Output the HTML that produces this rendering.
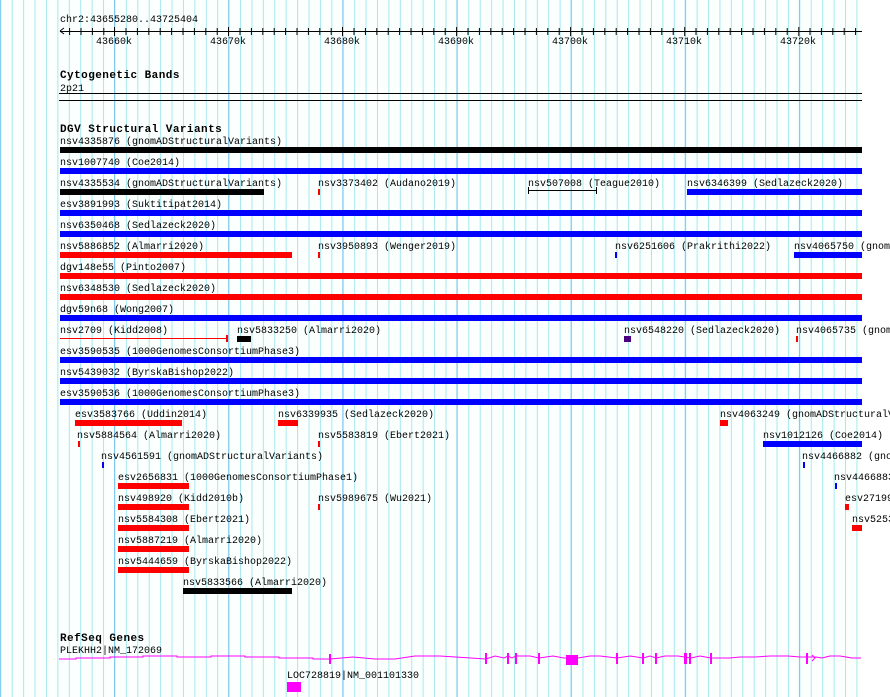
<!DOCTYPE html>
<html><head><meta charset="utf-8"><style>
html,body{margin:0;padding:0;background:#fff;}
#w{position:relative;width:890px;height:697px;overflow:hidden;background:#fff;font-family:"Liberation Mono","DejaVu Sans Mono",monospace;font-size:10px;line-height:10px;color:#000;}
.t{position:absolute;white-space:nowrap;margin-top:3px;}
.b{position:absolute;height:6px;}
.h{font-weight:bold;font-size:11px;letter-spacing:0.45px;}
.k{background:#000}.u{background:#0000ff}.r{background:#ff0000}
</style></head><body><div id="w">
<svg style="position:absolute;left:0;top:0" width="890" height="697">
<defs>
<pattern id="mn" x="0.3" y="0" width="11.415" height="697" patternUnits="userSpaceOnUse"><rect x="0" y="0" width="1" height="697" fill="#a8e8ee"/></pattern>
<pattern id="mj" x="114" y="0" width="114.15" height="697" patternUnits="userSpaceOnUse"><rect x="0" y="0" width="1" height="697" fill="#80c8ee"/></pattern>
</defs>
<rect x="0" y="0" width="862" height="697" fill="#fbfffd"/>
<rect x="0" y="0" width="862" height="697" fill="url(#mn)"/>
<rect x="0" y="0" width="862" height="697" fill="url(#mj)"/>
</svg>

<div class="t" style="left:60px;top:13px">chr2:43655280..43725404</div>
<div class="b k" style="left:60px;top:31px;width:802px;height:1px"></div>
<svg style="position:absolute;left:0;top:0" width="890" height="60">
<path d="M60,31 l4,-3 M60,31 l4,3" stroke="#000" fill="none"/>
<g stroke="#000">
<line x1="69.6" y1="28" x2="69.6" y2="35"/><line x1="81" y1="28" x2="81" y2="35"/><line x1="92.4" y1="28" x2="92.4" y2="35"/><line x1="103.8" y1="28" x2="103.8" y2="35"/><line x1="114.5" y1="27" x2="114.5" y2="36"/><line x1="126" y1="28" x2="126" y2="35"/><line x1="137.4" y1="28" x2="137.4" y2="35"/><line x1="148.8" y1="28" x2="148.8" y2="35"/><line x1="160.2" y1="28" x2="160.2" y2="35"/><line x1="171.6" y1="28" x2="171.6" y2="35"/><line x1="183" y1="28" x2="183" y2="35"/><line x1="194.4" y1="28" x2="194.4" y2="35"/><line x1="205.8" y1="28" x2="205.8" y2="35"/><line x1="217.2" y1="28" x2="217.2" y2="35"/><line x1="228.5" y1="27" x2="228.5" y2="36"/><line x1="240" y1="28" x2="240" y2="35"/><line x1="251.4" y1="28" x2="251.4" y2="35"/><line x1="262.8" y1="28" x2="262.8" y2="35"/><line x1="274.2" y1="28" x2="274.2" y2="35"/><line x1="285.6" y1="28" x2="285.6" y2="35"/><line x1="297" y1="28" x2="297" y2="35"/><line x1="308.4" y1="28" x2="308.4" y2="35"/><line x1="319.8" y1="28" x2="319.8" y2="35"/><line x1="331.2" y1="28" x2="331.2" y2="35"/><line x1="342.5" y1="27" x2="342.5" y2="36"/><line x1="354" y1="28" x2="354" y2="35"/><line x1="365.4" y1="28" x2="365.4" y2="35"/><line x1="376.8" y1="28" x2="376.8" y2="35"/><line x1="388.2" y1="28" x2="388.2" y2="35"/><line x1="399.6" y1="28" x2="399.6" y2="35"/><line x1="411" y1="28" x2="411" y2="35"/><line x1="422.4" y1="28" x2="422.4" y2="35"/><line x1="433.8" y1="28" x2="433.8" y2="35"/><line x1="445.2" y1="28" x2="445.2" y2="35"/><line x1="456.6" y1="27" x2="456.6" y2="36"/><line x1="468" y1="28" x2="468" y2="35"/><line x1="479.4" y1="28" x2="479.4" y2="35"/><line x1="490.8" y1="28" x2="490.8" y2="35"/><line x1="502.2" y1="28" x2="502.2" y2="35"/><line x1="513.6" y1="28" x2="513.6" y2="35"/><line x1="525" y1="28" x2="525" y2="35"/><line x1="536.4" y1="28" x2="536.4" y2="35"/><line x1="547.8" y1="28" x2="547.8" y2="35"/><line x1="559.2" y1="28" x2="559.2" y2="35"/><line x1="570.6" y1="27" x2="570.6" y2="36"/><line x1="582" y1="28" x2="582" y2="35"/><line x1="593.4" y1="28" x2="593.4" y2="35"/><line x1="604.8" y1="28" x2="604.8" y2="35"/><line x1="616.2" y1="28" x2="616.2" y2="35"/><line x1="627.6" y1="28" x2="627.6" y2="35"/><line x1="639" y1="28" x2="639" y2="35"/><line x1="650.4" y1="28" x2="650.4" y2="35"/><line x1="661.8" y1="28" x2="661.8" y2="35"/><line x1="673.2" y1="28" x2="673.2" y2="35"/><line x1="684.7" y1="27" x2="684.7" y2="36"/><line x1="696" y1="28" x2="696" y2="35"/><line x1="707.4" y1="28" x2="707.4" y2="35"/><line x1="718.8" y1="28" x2="718.8" y2="35"/><line x1="730.2" y1="28" x2="730.2" y2="35"/><line x1="741.6" y1="28" x2="741.6" y2="35"/><line x1="753" y1="28" x2="753" y2="35"/><line x1="764.4" y1="28" x2="764.4" y2="35"/><line x1="775.8" y1="28" x2="775.8" y2="35"/><line x1="787.2" y1="28" x2="787.2" y2="35"/><line x1="798.8" y1="27" x2="798.8" y2="36"/><line x1="810" y1="28" x2="810" y2="35"/><line x1="821.4" y1="28" x2="821.4" y2="35"/><line x1="832.8" y1="28" x2="832.8" y2="35"/><line x1="844.2" y1="28" x2="844.2" y2="35"/><line x1="855.6" y1="28" x2="855.6" y2="35"/>
</g></svg>
<div class="t" style="left:96px;top:35px">43660k</div>
<div class="t" style="left:210px;top:35px">43670k</div>
<div class="t" style="left:324px;top:35px">43680k</div>
<div class="t" style="left:438px;top:35px">43690k</div>
<div class="t" style="left:552px;top:35px">43700k</div>
<div class="t" style="left:666px;top:35px">43710k</div>
<div class="t" style="left:780px;top:35px">43720k</div>

<div class="t h" style="left:60px;top:68px">Cytogenetic Bands</div>
<div class="t" style="left:60px;top:82px">2p21</div>
<div class="b k" style="left:59px;top:93px;width:803px;height:1px"></div>
<div class="b k" style="left:59px;top:100px;width:803px;height:1px"></div>

<div class="t h" style="left:60px;top:122px">DGV Structural Variants</div>

<div class="t" style="left:60px;top:135px">nsv4335876 (gnomADStructuralVariants)</div><div class="b k" style="left:60px;top:147px;width:802px"></div>
<div class="t" style="left:60px;top:156px">nsv1007740 (Coe2014)</div><div class="b u" style="left:60px;top:168px;width:802px"></div>
<div class="t" style="left:60px;top:177px">nsv4335534 (gnomADStructuralVariants)</div><div class="b k" style="left:60px;top:189px;width:204px"></div>
<div class="t" style="left:318px;top:177px">nsv3373402 (Audano2019)</div><div class="b r" style="left:318px;top:189px;width:2px"></div>
<div class="t" style="left:528px;top:177px">nsv507008 (Teague2010)</div><div class="b k" style="left:528px;top:190px;width:69px;height:1px"></div><div class="b k" style="left:528px;top:187px;width:1px;height:7px"></div><div class="b k" style="left:596px;top:187px;width:1px;height:7px"></div>
<div class="t" style="left:687px;top:177px">nsv6346399 (Sedlazeck2020)</div><div class="b u" style="left:687px;top:189px;width:175px"></div>
<div class="t" style="left:60px;top:198px">esv3891993 (Suktitipat2014)</div><div class="b u" style="left:60px;top:210px;width:802px"></div>
<div class="t" style="left:60px;top:219px">nsv6350468 (Sedlazeck2020)</div><div class="b u" style="left:60px;top:231px;width:802px"></div>
<div class="t" style="left:60px;top:240px">nsv5886852 (Almarri2020)</div><div class="b r" style="left:60px;top:252px;width:232px"></div>
<div class="t" style="left:318px;top:240px">nsv3950893 (Wenger2019)</div><div class="b r" style="left:318px;top:252px;width:2px"></div>
<div class="t" style="left:615px;top:240px">nsv6251606 (Prakrithi2022)</div><div class="b u" style="left:615px;top:252px;width:2px"></div>
<div class="t" style="left:794px;top:240px">nsv4065750 (gnomADStructuralVariants)</div><div class="b u" style="left:794px;top:252px;width:68px"></div>
<div class="t" style="left:60px;top:261px">dgv148e55 (Pinto2007)</div><div class="b r" style="left:60px;top:273px;width:802px"></div>
<div class="t" style="left:60px;top:282px">nsv6348530 (Sedlazeck2020)</div><div class="b r" style="left:60px;top:294px;width:802px"></div>
<div class="t" style="left:60px;top:303px">dgv59n68 (Wong2007)</div><div class="b u" style="left:60px;top:315px;width:802px"></div>
<div class="t" style="left:60px;top:324px">nsv2709 (Kidd2008)</div><div class="b r" style="left:60px;top:338px;width:168px;height:1px"></div><div class="b r" style="left:226px;top:335px;width:2px;height:7px"></div>
<div class="t" style="left:237px;top:324px">nsv5833250 (Almarri2020)</div><div class="b k" style="left:237px;top:336px;width:14px"></div>
<div class="t" style="left:624px;top:324px">nsv6548220 (Sedlazeck2020)</div><div class="b" style="left:624px;top:336px;width:7px;background:#4b0082"></div>
<div class="t" style="left:796px;top:324px">nsv4065735 (gnomADStructuralVariants)</div><div class="b r" style="left:796px;top:336px;width:2px"></div>
<div class="t" style="left:60px;top:345px">esv3590535 (1000GenomesConsortiumPhase3)</div><div class="b u" style="left:60px;top:357px;width:802px"></div>
<div class="t" style="left:60px;top:366px">nsv5439032 (ByrskaBishop2022)</div><div class="b u" style="left:60px;top:378px;width:802px"></div>
<div class="t" style="left:60px;top:387px">esv3590536 (1000GenomesConsortiumPhase3)</div><div class="b u" style="left:60px;top:399px;width:802px"></div>
<div class="t" style="left:75px;top:408px">esv3583766 (Uddin2014)</div><div class="b r" style="left:75px;top:420px;width:107px"></div>
<div class="t" style="left:278px;top:408px">nsv6339935 (Sedlazeck2020)</div><div class="b r" style="left:278px;top:420px;width:20px"></div>
<div class="t" style="left:720px;top:408px">nsv4063249 (gnomADStructuralVariants)</div><div class="b r" style="left:720px;top:420px;width:8px"></div>
<div class="t" style="left:77px;top:429px">nsv5884564 (Almarri2020)</div><div class="b r" style="left:78px;top:441px;width:2px"></div>
<div class="t" style="left:318px;top:429px">nsv5583819 (Ebert2021)</div><div class="b r" style="left:318px;top:441px;width:2px"></div>
<div class="t" style="left:763px;top:429px">nsv1012126 (Coe2014)</div><div class="b u" style="left:763px;top:441px;width:99px"></div>
<div class="t" style="left:101px;top:450px">nsv4561591 (gnomADStructuralVariants)</div><div class="b u" style="left:102px;top:462px;width:2px"></div>
<div class="t" style="left:802px;top:450px">nsv4466882 (gnomADStructuralVariants)</div><div class="b u" style="left:803px;top:462px;width:2px"></div>
<div class="t" style="left:118px;top:471px">esv2656831 (1000GenomesConsortiumPhase1)</div><div class="b r" style="left:118px;top:483px;width:71px"></div>
<div class="t" style="left:834px;top:471px">nsv4466883</div><div class="b u" style="left:835px;top:483px;width:2px"></div>
<div class="t" style="left:118px;top:492px">nsv498920 (Kidd2010b)</div><div class="b r" style="left:118px;top:504px;width:71px"></div>
<div class="t" style="left:318px;top:492px">nsv5989675 (Wu2021)</div><div class="b r" style="left:318px;top:504px;width:2px"></div>
<div class="t" style="left:845px;top:492px">esv27199</div><div class="b r" style="left:845px;top:504px;width:4px"></div>
<div class="t" style="left:118px;top:513px">nsv5584308 (Ebert2021)</div><div class="b r" style="left:118px;top:525px;width:71px"></div>
<div class="t" style="left:852px;top:513px">nsv5253</div><div class="b r" style="left:852px;top:525px;width:10px"></div>
<div class="t" style="left:118px;top:534px">nsv5887219 (Almarri2020)</div><div class="b r" style="left:118px;top:546px;width:71px"></div>
<div class="t" style="left:118px;top:555px">nsv5444659 (ByrskaBishop2022)</div><div class="b r" style="left:118px;top:567px;width:71px"></div>
<div class="t" style="left:183px;top:576px">nsv5833566 (Almarri2020)</div><div class="b k" style="left:183px;top:588px;width:109px"></div>

<div class="t h" style="left:60px;top:631px">RefSeq Genes</div>
<div class="t" style="left:60px;top:644px">PLEKHH2|NM_172069</div>
<svg style="position:absolute;left:0;top:640px" width="890" height="57">
<g stroke="#ff00ff" fill="none">
<polyline points="59,19 76,19 76,18 110,18 110,17 143,17 143,16 177,16 177,17 211,17 211,16 245,16 245,17 279,17 279,18 313,18 313,19 330,19 353,17 375,19 395,19 415,16 440,16 486,19 495,16 504,18 508,16 512,18 516,16 530,16 539,18 553,16 564,18 578,18 590,16 600,16 617,18 630,16 643,18 650,16 656,18 665,16 678,16 691,18 700,16 711,18 730,18 740,17 755,17 770,16 788,16 800,17 816,17 822,18 830,16 840,16 852,18 861,18"/>
</g>
<g fill="#ff00ff">
<rect x="329" y="14" width="2" height="10"/><rect x="485" y="13" width="2" height="11"/><rect x="507" y="13" width="2" height="11"/><rect x="515" y="13" width="2" height="11"/><rect x="538" y="13" width="2" height="11"/><rect x="566" y="15" width="12" height="10"/><rect x="616" y="13" width="2" height="11"/><rect x="642" y="13" width="2" height="11"/><rect x="655" y="13" width="2" height="11"/><rect x="684" y="13" width="3" height="11"/><rect x="689" y="13" width="2" height="11"/><rect x="710" y="13" width="2" height="11"/><rect x="806" y="13" width="2" height="11"/>
<rect x="287" y="42" width="14" height="10"/>
</g>
<path d="M812,15 l3,3 l-3,3" stroke="#ff00ff" fill="none"/>
</svg>
<div class="t" style="left:287px;top:669px">LOC728819|NM_001101330</div>
</div></body></html>
